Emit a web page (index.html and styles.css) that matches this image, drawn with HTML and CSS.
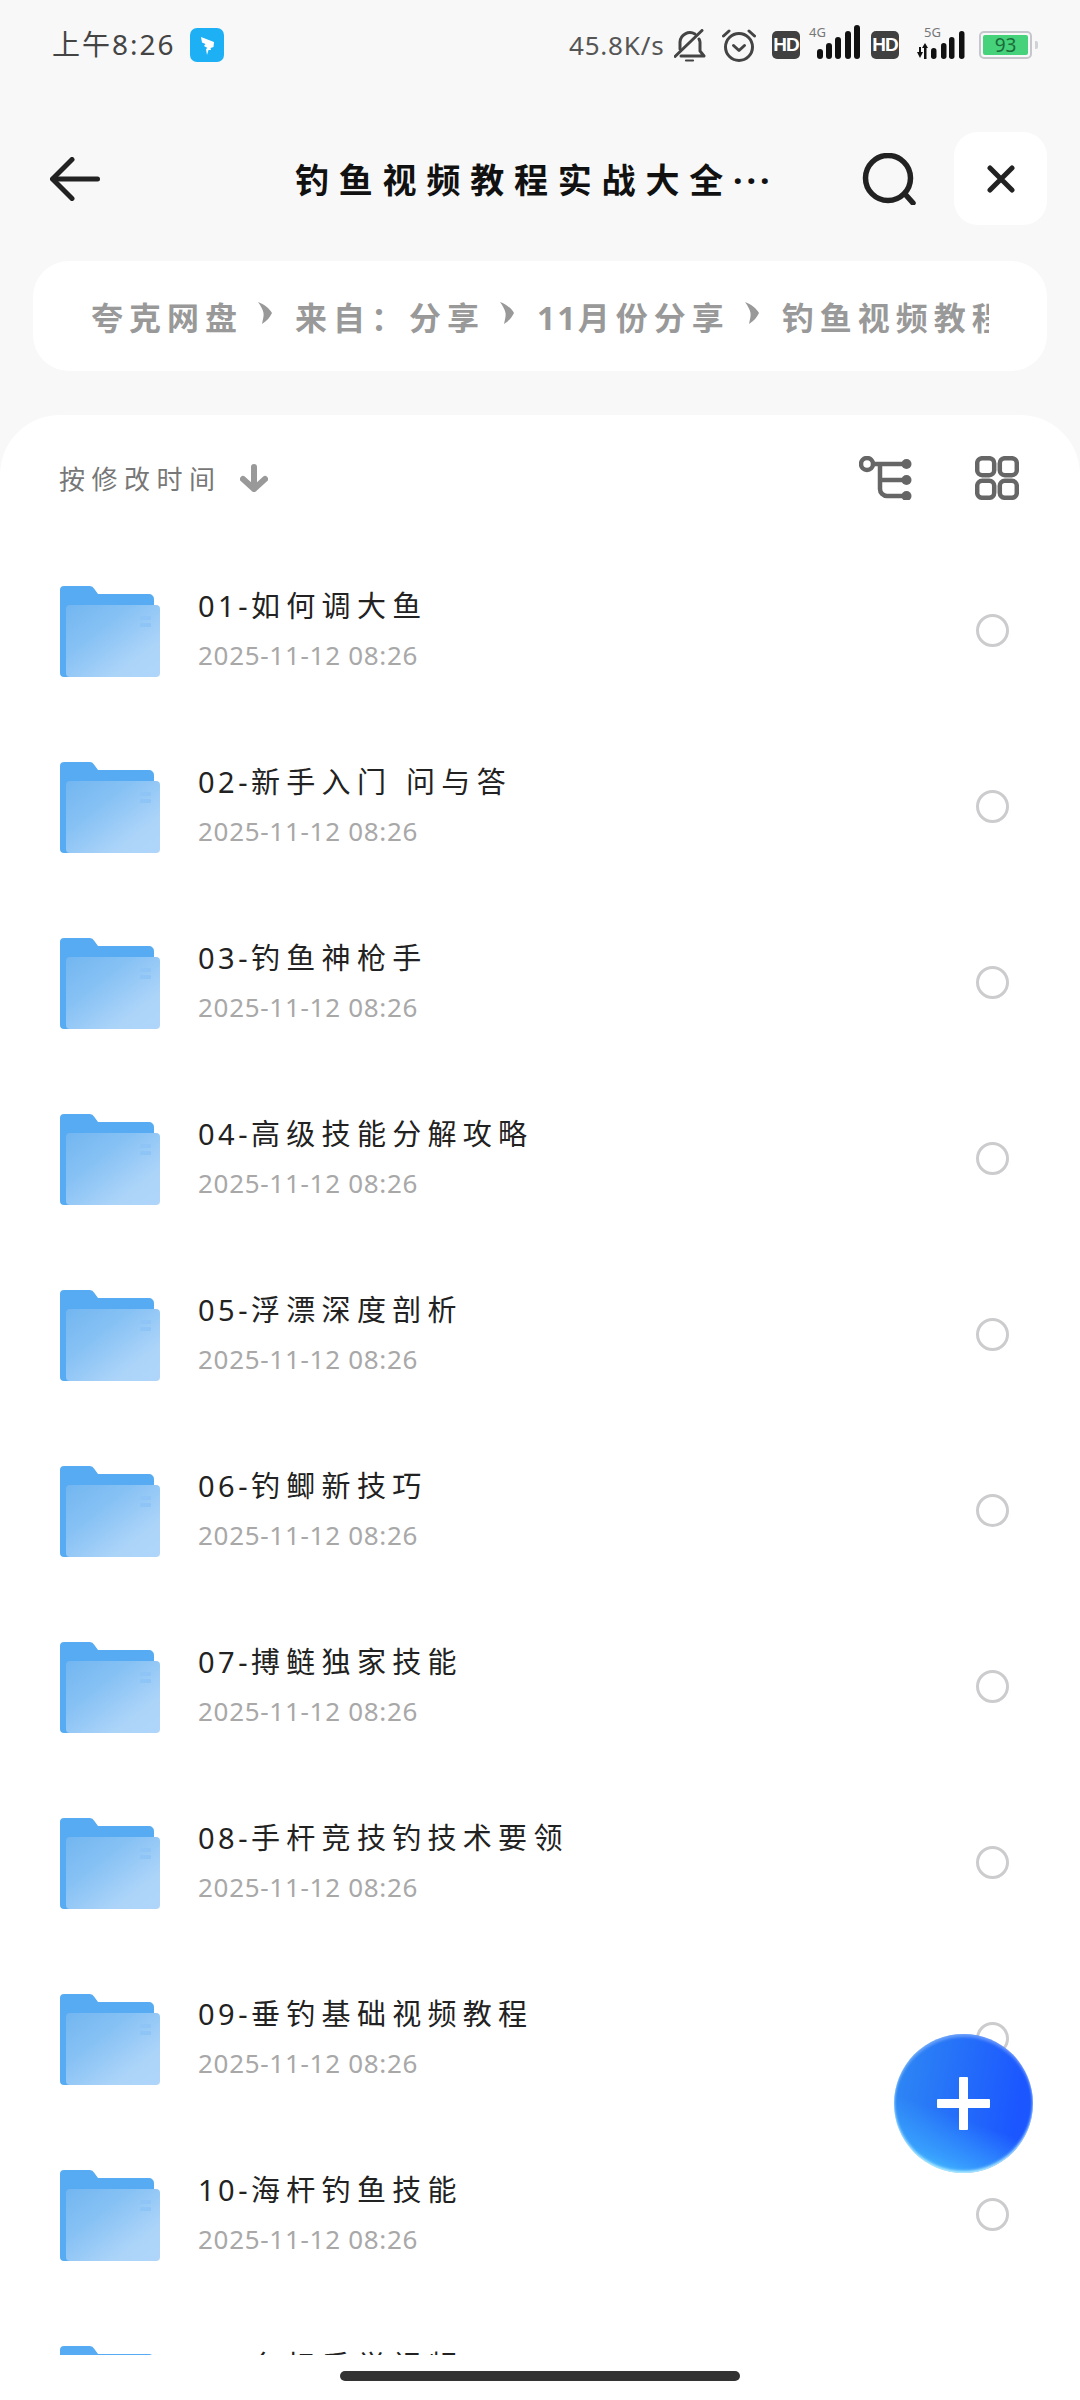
FILE: index.html
```html
<!DOCTYPE html>
<html lang="zh-CN">
<head>
    <meta charset="UTF-8">
    <meta name="viewport" content="width=device-width, initial-scale=1.0">
    <title>钓鱼视频教程实战大全</title>
    <link rel="stylesheet" href="styles.css">
</head>
<body>
<div class="screen">
    <!-- Status bar -->
    <div class="status-bar">
        <span class="clock">上午8:26</span>
        <svg class="app-badge" width="34" height="34" viewBox="0 0 34 34">
            <rect width="34" height="34" rx="7" fill="#1eb0f5"/>
            <path d="M11 9L24 14L23.500 19L20.500 20L21 22L18.500 22L17 27L16 21L17.500 20L14 18L15.500 16L12 14.500Z" fill="#fff"/>
        </svg>
        <span class="spacer"></span>
        <span class="speed">45.8K/s</span>
        <svg class="bell" width="32" height="33" viewBox="0 0 32 33" fill="none" stroke="#444" stroke-width="3" stroke-linecap="round" stroke-linejoin="round">
            <path d="M6 20V13a10 10 0 0 1 15-8"/>
            <path d="M25 10c.5 1 1 2 1 3v9l4 5H7"/>
            <path d="M1 27.500L28 1.500"/>
            <path d="M12 31.500h7" stroke-width="2.200"/>
        </svg>
        <svg class="alarm" width="34" height="33" viewBox="0 0 34 33" fill="none" stroke="#444" stroke-width="3" stroke-linecap="round" stroke-linejoin="round">
            <circle cx="17" cy="18" r="13.500"/>
            <path d="M11.500 16.500l5.500 5 5.500-5"/>
            <path d="M1.500 7L7 2M32.500 7L27 2"/>
        </svg>
        <span class="hd">HD</span>
        <span class="signal signal-4g">
            <span class="net">4G</span>
            <svg width="43" height="34" viewBox="0 0 43 34" fill="#111">
                <rect x="0" y="24" width="6" height="10" rx="3"/>
                <rect x="9" y="18" width="6" height="16" rx="3"/>
                <rect x="18" y="12" width="6" height="22" rx="3"/>
                <rect x="28" y="6" width="6" height="28" rx="3"/>
                <rect x="37" y="0" width="6" height="34" rx="3"/>
            </svg>
        </span>
        <span class="hd">HD</span>
        <span class="signal signal-5g">
            <span class="net">5G</span>
            <svg width="48" height="28" viewBox="0 0 48 28" fill="#111">
                <path d="M0 21h2v-5h2v5h2l-3 6z"/>
                <path d="M7 28V17H5l3-5 3 5H9.500v11z"/>
                <rect x="14" y="17" width="5.500" height="11" rx="2.700"/>
                <rect x="24" y="12" width="5.500" height="16" rx="2.700"/>
                <rect x="32" y="6" width="5.500" height="22" rx="2.700"/>
                <rect x="42" y="0" width="5.500" height="28" rx="2.700"/>
            </svg>
        </span>
        <span class="battery"><span class="battery-level">93</span></span>
        <span class="battery-nub"></span>
    </div>

    <!-- Title bar -->
    <div class="title-bar">
        <svg class="back" width="50" height="44" viewBox="0 0 50 44" fill="none" stroke="#222" stroke-width="5" stroke-linecap="round" stroke-linejoin="round">
            <path d="M22 2.500L2.500 22 22 41.500"/>
            <path d="M3 22h44.500"/>
        </svg>
        <div class="page-title">钓鱼视频教程实战大全<span class="more">···</span></div>
        <svg class="search" width="54" height="52" viewBox="0 0 54 52" fill="none" stroke="#222" stroke-width="5.500" stroke-linecap="round">
            <circle cx="26" cy="25" r="22.500"/>
            <path d="M43 41l8 9"/>
        </svg>
        <div class="close-btn">
            <svg width="28" height="28" viewBox="0 0 28 28" fill="none" stroke="#222" stroke-width="5" stroke-linecap="round">
                <path d="M3 3l22 22M25 3L3 25"/>
            </svg>
        </div>
    </div>

    <!-- Breadcrumb -->
    <div class="crumbs">
        <div class="crumbs-track">
            <span>夸克网盘</span>
            <svg class="sep" width="14" height="24" viewBox="0 0 14 24"><path d="M0 1C6 3 12 8 14 12C12 16 9 20 4 23C5 18 6 15 5.500 12C5 9 3 5 0 1Z" fill="#999"/></svg>
            <span>来自：分享</span>
            <svg class="sep" width="14" height="24" viewBox="0 0 14 24"><path d="M0 1C6 3 12 8 14 12C12 16 9 20 4 23C5 18 6 15 5.500 12C5 9 3 5 0 1Z" fill="#999"/></svg>
            <span><span class="num">11</span>月份分享</span>
            <svg class="sep" width="14" height="24" viewBox="0 0 14 24"><path d="M0 1C6 3 12 8 14 12C12 16 9 20 4 23C5 18 6 15 5.500 12C5 9 3 5 0 1Z" fill="#999"/></svg>
            <span>钓鱼视频教程</span>
        </div>
    </div>

    <!-- File sheet -->
    <div class="sheet">
        <div class="sort-bar">
            <span class="sort-label">按修改时间</span>
            <svg class="sort-arrow" width="28" height="28" viewBox="0 0 28 28" fill="none" stroke="#999" stroke-width="6" stroke-linecap="round" stroke-linejoin="round">
                <path d="M14 3v22M3 15l11 10 11-10"/>
            </svg>
            <span class="spacer"></span>
            <svg class="tree" width="53" height="44" viewBox="0 0 53 44" fill="none" stroke="#666" stroke-width="4.500">
                <circle cx="8" cy="8" r="6"/>
                <path d="M14 8h34M21 8v25a7 7 0 0 0 7 7h20M21 24h27"/>
                <g fill="#666" stroke="none">
                    <circle cx="47.500" cy="8" r="5"/>
                    <circle cx="47.500" cy="24" r="5"/>
                    <circle cx="47.500" cy="40" r="5"/>
                </g>
            </svg>
            <svg class="grid" width="44" height="44" viewBox="0 0 44 44" fill="none" stroke="#666" stroke-width="4.500">
                <rect x="2.200" y="2.200" width="17" height="17" rx="5"/>
                <rect x="24.800" y="2.200" width="17" height="17" rx="5"/>
                <rect x="2.200" y="24.800" width="17" height="17" rx="5"/>
                <rect x="24.800" y="24.800" width="17" height="17" rx="5"/>
            </svg>
        </div>
        <div class="file-list">
            <div class="file-row">
                <svg class="folder" width="100" height="92"><use href="#folder"/></svg>
                <div class="file-info"><div class="file-name"><span class="file-no">01-</span>如何调大鱼</div><div class="file-date">2025-11-12 08:26</div></div>
                <span class="radio"></span>
            </div>
            <div class="file-row">
                <svg class="folder" width="100" height="92"><use href="#folder"/></svg>
                <div class="file-info"><div class="file-name"><span class="file-no">02-</span>新手入门 问与答</div><div class="file-date">2025-11-12 08:26</div></div>
                <span class="radio"></span>
            </div>
            <div class="file-row">
                <svg class="folder" width="100" height="92"><use href="#folder"/></svg>
                <div class="file-info"><div class="file-name"><span class="file-no">03-</span>钓鱼神枪手</div><div class="file-date">2025-11-12 08:26</div></div>
                <span class="radio"></span>
            </div>
            <div class="file-row">
                <svg class="folder" width="100" height="92"><use href="#folder"/></svg>
                <div class="file-info"><div class="file-name"><span class="file-no">04-</span>高级技能分解攻略</div><div class="file-date">2025-11-12 08:26</div></div>
                <span class="radio"></span>
            </div>
            <div class="file-row">
                <svg class="folder" width="100" height="92"><use href="#folder"/></svg>
                <div class="file-info"><div class="file-name"><span class="file-no">05-</span>浮漂深度剖析</div><div class="file-date">2025-11-12 08:26</div></div>
                <span class="radio"></span>
            </div>
            <div class="file-row">
                <svg class="folder" width="100" height="92"><use href="#folder"/></svg>
                <div class="file-info"><div class="file-name"><span class="file-no">06-</span>钓鲫新技巧</div><div class="file-date">2025-11-12 08:26</div></div>
                <span class="radio"></span>
            </div>
            <div class="file-row">
                <svg class="folder" width="100" height="92"><use href="#folder"/></svg>
                <div class="file-info"><div class="file-name"><span class="file-no">07-</span>搏鲢独家技能</div><div class="file-date">2025-11-12 08:26</div></div>
                <span class="radio"></span>
            </div>
            <div class="file-row">
                <svg class="folder" width="100" height="92"><use href="#folder"/></svg>
                <div class="file-info"><div class="file-name"><span class="file-no">08-</span>手杆竞技钓技术要领</div><div class="file-date">2025-11-12 08:26</div></div>
                <span class="radio"></span>
            </div>
            <div class="file-row">
                <svg class="folder" width="100" height="92"><use href="#folder"/></svg>
                <div class="file-info"><div class="file-name"><span class="file-no">09-</span>垂钓基础视频教程</div><div class="file-date">2025-11-12 08:26</div></div>
                <span class="radio"></span>
            </div>
            <div class="file-row">
                <svg class="folder" width="100" height="92"><use href="#folder"/></svg>
                <div class="file-info"><div class="file-name"><span class="file-no">10-</span>海杆钓鱼技能</div><div class="file-date">2025-11-12 08:26</div></div>
                <span class="radio"></span>
            </div>
            <div class="file-row">
                <svg class="folder" width="100" height="92"><use href="#folder"/></svg>
                <div class="file-info"><div class="file-name"><span class="file-no">11-</span>台标手学视频</div><div class="file-date">2025-11-12 08:26</div></div>
                <span class="radio"></span>
            </div>
        </div>
        <div class="home-bar"></div>
    </div>

    <!-- Add button -->
    <div class="fab"><span class="fab-h"></span><span class="fab-v"></span></div>

    <!-- Shared folder icon -->
    <svg class="defs" width="0" height="0">
        <defs>
            <linearGradient id="folder-front" x1="0" y1="0" x2="1" y2="1">
                <stop offset="0" stop-color="#72b6f0"/>
                <stop offset="0.35" stop-color="#86c1f4"/>
                <stop offset="0.75" stop-color="#acd4f9"/>
                <stop offset="1" stop-color="#afd6fa"/>
            </linearGradient>
            <g id="folder">
                <path d="M4 0H30a5 5 0 0 1 4 2.500L38 8H89a5 5 0 0 1 5 5V91H4a4 4 0 0 1-4-4V4a4 4 0 0 1 4-4z" fill="#56abf2"/>
                <rect x="6" y="19" width="94" height="72" rx="4" fill="url(#folder-front)"/>
                <rect x="80" y="30" width="11" height="4" rx="1" fill="#8ec5f6"/>
                <rect x="80" y="37" width="11" height="4" rx="1" fill="#8ec5f6"/>
            </g>
        </defs>
    </svg>
</div>
</body>
</html>
```

FILE: styles.css
```css
* {
    box-sizing: border-box;
}
body {
    margin: 0;
    background: #f8f8f8;
    font-family: "Noto Sans", "Noto Sans CJK SC", sans-serif;
}
.screen {
    position: relative;
    width: 1080px;
    height: 2400px;
    overflow: hidden;
    display: flex;
    flex-direction: column;
}
.spacer {
    flex: 1;
}
.defs {
    position: absolute;
}

/* Status bar */
.status-bar {
    height: 90px;
    padding: 0 42px 0 52px;
    display: flex;
    align-items: center;
    color: #444;
}
.clock {
    font-size: 28px;
    letter-spacing: 2px;
    width: 138px;
    margin-bottom: 4px;
}
.speed {
    font-size: 26px;
    width: 105px;
    letter-spacing: 0.800px;
    color: #555;
}
.bell {
    margin-right: 16px;
}
.alarm {
    margin-right: 16px;
}
.hd {
    width: 28px;
    height: 28px;
    border-radius: 5px;
    background: #404040;
    color: #fff;
    font: bold 19px/28px "Liberation Sans", sans-serif;
    text-align: center;
    letter-spacing: -1px;
}
.signal {
    position: relative;
    display: flex;
    align-items: flex-end;
    height: 34px;
}
.signal-4g {
    margin: 0 11px 6px 17px;
}
.signal-5g {
    margin: 0 14px 0 18px;
    height: 28px;
}
.net {
    position: absolute;
    font-size: 13px;
    line-height: 13px;
    color: #777;
}
.signal-4g .net {
    left: -8px;
    top: 1px;
}
.signal-5g .net {
    left: 7px;
    top: -5px;
}
.battery {
    width: 53px;
    height: 28px;
    padding: 2px;
    border: 2px solid #c5c7cc;
    border-radius: 5px;
}
.battery-level {
    display: block;
    width: 45px;
    height: 20px;
    border-radius: 2px;
    background: #45d27a;
    color: #1b6b3a;
    font-size: 19px;
    line-height: 20px;
    text-align: center;
}
.battery-nub {
    width: 3px;
    height: 8px;
    margin-left: 3px;
    border-radius: 0 2px 2px 0;
    background: #d0d2d6;
}

/* Title bar */
.title-bar {
    height: 93px;
    margin-top: 42px;
    padding: 0 33px 0 50px;
    display: flex;
    align-items: center;
}
.page-title {
    padding-left: 195px;
    flex: 1;
    font-size: 34px;
    font-weight: bold;
    letter-spacing: 9.800px;
    color: #111;
    white-space: nowrap;
}
.more {
    letter-spacing: 4px;
}
.search {
    margin-right: 38px;
}
.close-btn {
    width: 93px;
    height: 93px;
    border-radius: 24px;
    background: #fff;
    display: flex;
    align-items: center;
    justify-content: center;
}

/* Breadcrumb */
.crumbs {
    height: 110px;
    margin: 36px 33px 0;
    padding: 0 58px;
    border-radius: 36px;
    background: #fff;
    display: flex;
    align-items: center;
}
.crumbs-track {
    width: 901px;
    overflow: hidden;
    display: flex;
    align-items: center;
    white-space: nowrap;
    font-size: 32px;
    font-weight: bold;
    letter-spacing: 6px;
    color: #999;
}
.num {
    letter-spacing: 2px;
}
.sep {
    flex: none;
    margin: 0 23px 6px 15px;
}

/* File sheet */
.sheet {
    flex: 1;
    margin-top: 44px;
    border-radius: 60px 60px 0 0;
    background: #fff;
    display: flex;
    flex-direction: column;
}
.sort-bar {
    height: 128px;
    flex: none;
    padding: 0 61px 3px 59px;
    display: flex;
    align-items: center;
}
.sort-label {
    font-size: 26px;
    letter-spacing: 6.500px;
    color: #777;
    margin-right: 18px;
}
.tree {
    margin-right: 63px;
}
.file-list {
    height: 1812px;
    overflow: hidden;
}
.file-row {
    height: 176px;
    padding: 0 71px 0 60px;
    display: flex;
    align-items: center;
}
.folder {
    flex: none;
    margin: 2px 38px 0 0;
}
.file-info {
    flex: 1;
    margin-bottom: 2px;
}
.file-name {
    font-size: 29px;
    line-height: 38px;
    letter-spacing: 6.300px;
    color: #222;
    white-space: pre;
}
.file-no {
    letter-spacing: 3.500px;
}
.file-date {
    margin-top: 12px;
    font-size: 26px;
    line-height: 36px;
    letter-spacing: 0.700px;
    color: #a8a8a8;
}
.radio {
    flex: none;
    width: 33px;
    height: 33px;
    margin-bottom: 2px;
    border: 3px solid #cccccf;
    border-radius: 50%;
}
.home-bar {
    width: 400px;
    height: 10px;
    margin: 16px 0 0 340px;
    border-radius: 5px;
    background: #333;
}

/* Add button */
.fab {
    position: absolute;
    left: 894px;
    top: 2034px;
    width: 139px;
    height: 139px;
    border-radius: 50%;
    background:
        linear-gradient(20deg, #4fd2ff 0, rgba(60, 170, 255, 0.75) 18%, rgba(40, 120, 255, 0) 42%),
        linear-gradient(100deg, #2f8af3 0, #1b56ff 85%);
    box-shadow: inset 0 -2px 3px #b5f0ff, inset 0 3px 3px rgba(255, 255, 255, 0.3);
}
.fab-h,
.fab-v {
    position: absolute;
    background: #fff;
    border-radius: 1px;
}
.fab-h {
    left: 43px;
    top: 65px;
    width: 53px;
    height: 9px;
}
.fab-v {
    left: 65px;
    top: 43px;
    width: 9px;
    height: 53px;
}
```
